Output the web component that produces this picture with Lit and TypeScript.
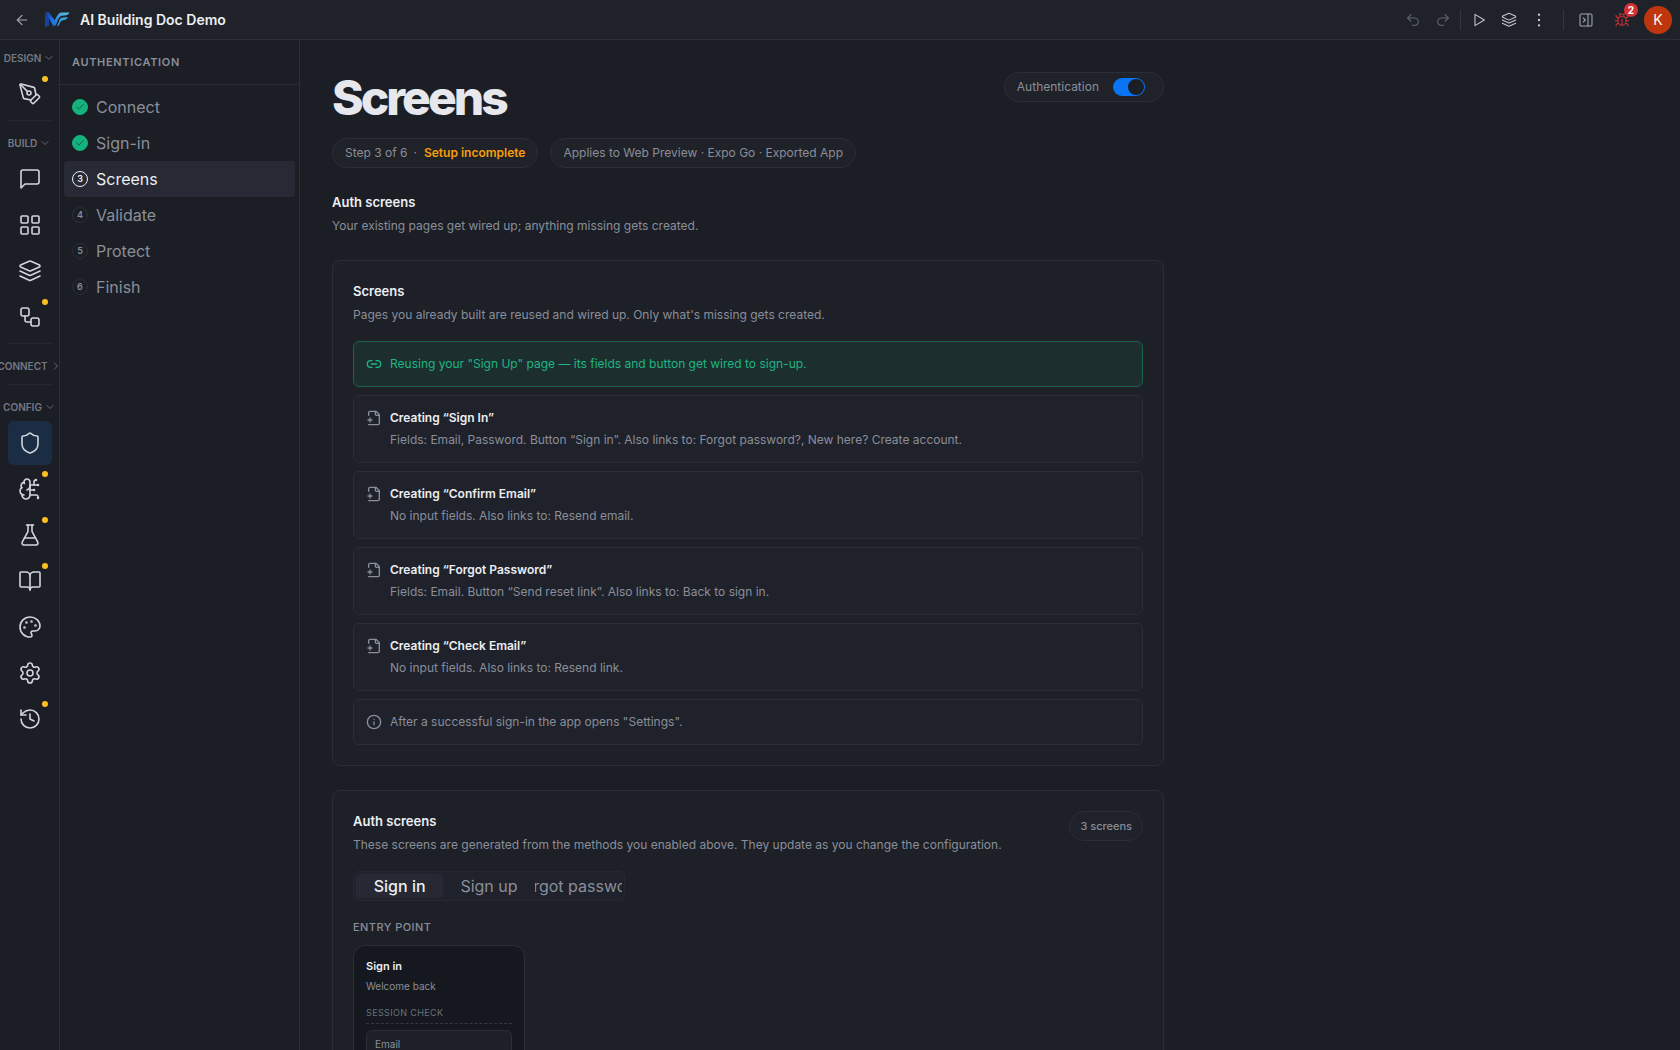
import { LitElement, html, css, svg, nothing, type TemplateResult, type SVGTemplateResult } from "lit";
import { customElement, property, state } from "lit/decorators.js";
import { classMap } from "lit/directives/class-map.js";

const glyphs: Record<string, SVGTemplateResult> = {
  back: svg`<path d="m12 19-7-7 7-7"/><path d="M19 12H5"/>`,
  undo: svg`<path d="M9 14 4 9l5-5"/><path d="M4 9h10.5a5.5 5.5 0 0 1 0 11H11"/>`,
  redo: svg`<path d="m15 14 5-5-5-5"/><path d="M20 9H9.5a5.5 5.5 0 0 0 0 11H13"/>`,
  play: svg`<path d="M6 3.5v17L20 12Z"/>`,
  layers: svg`<path d="m12.83 2.18a2 2 0 0 0-1.66 0L2.6 6.08a1 1 0 0 0 0 1.83l8.58 3.91a2 2 0 0 0 1.66 0l8.58-3.9a1 1 0 0 0 0-1.83Z"/><path d="m22 12-9.17 4.16a2 2 0 0 1-1.66 0L2 12"/><path d="m22 17-9.17 4.16a2 2 0 0 1-1.66 0L2 17"/>`,
  more: svg`<circle cx="12" cy="12" r="1"/><circle cx="12" cy="4" r="1"/><circle cx="12" cy="20" r="1"/>`,
  panel: svg`<rect x="3" y="3" width="18" height="18" rx="2"/><path d="M15 3v18"/><path d="m8 9 3 3-3 3"/>`,
  bug: svg`<path d="M8 2l1.9 1.9M16 2l-1.9 1.9M9 7.1v-1a3 3 0 1 1 6 0v1"/><path d="M12 20c-3.3 0-6-2.7-6-6v-3a4 4 0 0 1 4-4h4a4 4 0 0 1 4 4v3c0 3.3-2.7 6-6 6Z"/><path d="M12 20v-9M6.5 9C4.6 8.8 3 7.1 3 5M6 13H2M3 21c0-2.1 1.7-3.9 3.8-4M21 5c0 2.1-1.6 3.8-3.5 4M22 13h-4M17.2 17c2.1.1 3.8 1.9 3.8 4"/>`,
  pen: svg`<path d="M15.707 21.293a1 1 0 0 1-1.414 0l-1.586-1.586a1 1 0 0 1 0-1.414l5.586-5.586a1 1 0 0 1 1.414 0l1.586 1.586a1 1 0 0 1 0 1.414z"/><path d="m18 13-1.375-6.874a1 1 0 0 0-.746-.776L3.235 2.028a1 1 0 0 0-1.207 1.207L5.35 15.879a1 1 0 0 0 .776.746L13 18"/><path d="m2.3 2.3 7.286 7.286"/><circle cx="11" cy="11" r="2"/>`,
  chat: svg`<path d="M21 15a2 2 0 0 1-2 2H7l-4 4V5a2 2 0 0 1 2-2h14a2 2 0 0 1 2 2z"/>`,
  grid: svg`<rect x="3" y="3" width="7" height="7" rx="1"/><rect x="14" y="3" width="7" height="7" rx="1"/><rect x="14" y="14" width="7" height="7" rx="1"/><rect x="3" y="14" width="7" height="7" rx="1"/>`,
  flow: svg`<rect x="3" y="3" width="8" height="8" rx="2"/><path d="M7 11v4a2 2 0 0 0 2 2h4"/><rect x="13" y="13" width="8" height="8" rx="2"/>`,
  shield: svg`<path d="M20 13c0 5-3.5 7.5-7.66 8.95a1 1 0 0 1-.67-.01C7.5 20.5 4 18 4 13V6a1 1 0 0 1 1-1c2 0 4.5-1.2 6.24-2.72a1.17 1.17 0 0 1 1.52 0C14.51 3.81 17 5 19 5a1 1 0 0 1 1 1z"/>`,
  brain: svg`<path d="M12 5a3 3 0 1 0-5.997.125 4 4 0 0 0-2.526 5.77 4 4 0 0 0 .556 6.588A4 4 0 1 0 12 18Z"/><path d="M9 13a4.5 4.5 0 0 0 3-4"/><path d="M6.003 5.125A3 3 0 0 0 6.401 6.5"/><path d="M3.477 10.896a4 4 0 0 1 .585-.396"/><path d="M6 18a4 4 0 0 1-1.967-.516"/><path d="M12 13h4"/><path d="M12 18h6a2 2 0 0 1 2 2v1"/><path d="M12 8h8"/><path d="M16 8V5a2 2 0 0 1 2-2"/><circle cx="16" cy="13" r=".5"/><circle cx="18" cy="3" r=".5"/><circle cx="20" cy="21" r=".5"/><circle cx="20" cy="8" r=".5"/>`,
  flask: svg`<path d="M14 2v6a2 2 0 0 0 .245.96l5.51 10.08A2 2 0 0 1 18 22H6a2 2 0 0 1-1.755-2.96l5.51-10.08A2 2 0 0 0 10 8V2"/><path d="M6.453 15h11.094"/><path d="M8.5 2h7"/>`,
  book: svg`<path d="M12 7v14"/><path d="M3 18a1 1 0 0 1-1-1V4a1 1 0 0 1 1-1h5a4 4 0 0 1 4 4 4 4 0 0 1 4-4h5a1 1 0 0 1 1 1v13a1 1 0 0 1-1 1h-6a3 3 0 0 0-3 3 3 3 0 0 0-3-3z"/>`,
  palette: svg`<path d="M12 22a1 1 0 0 1 0-20 10 9 0 0 1 10 9 5 5 0 0 1-5 5h-2.25a1.75 1.75 0 0 0-1.4 2.8l.3.4a1.75 1.75 0 0 1-1.4 2.8z"/><circle cx="13.5" cy="6.5" r=".5"/><circle cx="17.5" cy="10.5" r=".5"/><circle cx="6.5" cy="12.5" r=".5"/><circle cx="8.5" cy="7.5" r=".5"/>`,
  gear: svg`<path d="M9.671 4.136a2.34 2.34 0 0 1 4.659 0 2.34 2.34 0 0 0 3.319 1.915 2.34 2.34 0 0 1 2.33 4.033 2.34 2.34 0 0 0 0 3.831 2.34 2.34 0 0 1-2.33 4.033 2.34 2.34 0 0 0-3.319 1.915 2.34 2.34 0 0 1-4.659 0 2.34 2.34 0 0 0-3.32-1.915 2.34 2.34 0 0 1-2.33-4.033 2.34 2.34 0 0 0 0-3.831A2.34 2.34 0 0 1 6.35 6.051a2.34 2.34 0 0 0 3.319-1.915"/><circle cx="12" cy="12" r="3"/>`,
  history: svg`<path d="M3 12a9 9 0 1 0 9-9 9.75 9.75 0 0 0-6.74 2.74L3 8"/><path d="M3 3v5h5"/><path d="M12 7v5l4 2"/>`,
  down: svg`<path d="m6 9 6 6 6-6"/>`,
  right: svg`<path d="m9 18 6-6-6-6"/>`,
  check: svg`<path d="M20 6 9 17l-5-5"/>`,
  link: svg`<path d="M9 17H7A5 5 0 0 1 7 7h2"/><path d="M15 7h2a5 5 0 1 1 0 10h-2"/><path d="M8 12h8"/>`,
  filePlus: svg`<path d="M4 22h14a2 2 0 0 0 2-2V7l-5-5H6a2 2 0 0 0-2 2v4"/><path d="M14 2v4a2 2 0 0 0 2 2h4"/><path d="M3 15h6"/><path d="M6 12v6"/>`,
  info: svg`<circle cx="12" cy="12" r="10"/><path d="M12 16v-4"/><path d="M12 8h.01"/>`,
};

@customElement("ui-icon")
export class UiIcon extends LitElement {
  @property() name = "";

  static styles = css`
    :host {
      display: block;
      flex: none;
      width: 16px;
      height: 16px;
    }
    svg {
      display: block;
      width: 100%;
      height: 100%;
      fill: none;
      stroke: currentColor;
      stroke-width: var(--stroke, 1.6);
      stroke-linecap: round;
      stroke-linejoin: round;
    }
  `;

  render() {
    return html`<svg viewBox="0 0 24 24" aria-hidden="true">${glyphs[this.name]}</svg>`;
  }
}

@customElement("top-bar")
export class TopBar extends LitElement {
  static styles = css`
    :host {
      display: block;
    }
    * {
      box-sizing: border-box;
    }
    .bar {
      display: flex;
      align-items: center;
      justify-content: space-between;
      height: 40px;
      padding: 0 8px;
      background: #1f2329;
      border-bottom: 1px solid #2c2f37;
    }
    .group {
      display: flex;
      align-items: center;
    }
    button {
      display: flex;
      align-items: center;
      justify-content: center;
      width: 30px;
      height: 30px;
      padding: 0;
      border: 0;
      background: none;
      color: #c3c6cd;
      font: inherit;
    }
    .back {
      width: 28px;
      margin-right: 8px;
      color: #a6aab2;
    }
    .dim {
      color: #63676f;
    }
    .logo {
      width: 26px;
      height: 18px;
      margin-right: 10px;
    }
    .name {
      margin: 0;
      font-size: 14px;
      line-height: 20px;
      font-weight: 600;
      color: #eceef2;
    }
    .rule {
      width: 1px;
      height: 20px;
      margin: 0 3px 0 2px;
      background: #32363e;
    }
    .rule.wide {
      margin: 0 7px 0 9px;
    }
    .panel {
      margin-right: 6px;
      color: #a2a6ae;
    }
    .bug {
      position: relative;
      margin-right: 7px;
      color: #c43232;
    }
    .badge {
      position: absolute;
      top: -2px;
      right: -1px;
      width: 14px;
      height: 14px;
      border-radius: 7px;
      background: #d53034;
      color: #ffffff;
      font-size: 10px;
      line-height: 14px;
      font-weight: 700;
    }
    .avatar {
      width: 28px;
      height: 28px;
      border-radius: 14px;
      background: #bf360c;
      color: #f5f6f8;
      font-size: 14px;
      font-weight: 400;
    }
  `;

  render() {
    return html`
      <header class="bar">
        <div class="group">
          <button class="back" aria-label="Back"><ui-icon name="back"></ui-icon></button>
          <svg class="logo" viewBox="0 0 26 18" aria-hidden="true">
            <defs>
              <linearGradient id="stem" x1="0" y1="0" x2="1" y2="1">
                <stop offset="0" stop-color="#123a8c" />
                <stop offset="0.5" stop-color="#1a63d8" />
                <stop offset="1" stop-color="#2b8cf0" />
              </linearGradient>
              <linearGradient id="wing" x1="0" y1="1" x2="1" y2="0">
                <stop offset="0" stop-color="#1668d8" />
                <stop offset="1" stop-color="#5fc4e0" />
              </linearGradient>
            </defs>
            <path fill="#14429c" d="M1 2v14.5l4-2V7z" />
            <path fill="url(#stem)" d="M1 1h3.5l6.5 8.5L9.5 15z" />
            <path fill="url(#wing)" d="M8.500 15.500C11 9 13 2.500 17 1.500h8.500C24.500 4 22 4.500 18 4.800c-3 .4-4.500 4.700-6 9.200z" />
            <path fill="#3a9fd6" d="M15.500 9c1-2.300 2.500-2.700 8.500-2.700-1 2.200-3 2.700-5 2.900-1.800.3-2.800 1.600-4 5l-2 1.300z" />
          </svg>
          <h1 class="name">AI Building Doc Demo</h1>
        </div>
        <div class="group">
          <button class="dim" aria-label="Undo"><ui-icon name="undo"></ui-icon></button>
          <button class="dim" aria-label="Redo"><ui-icon name="redo"></ui-icon></button>
          <span class="rule"></span>
          <button aria-label="Run"><ui-icon name="play"></ui-icon></button>
          <button aria-label="Layers"><ui-icon name="layers"></ui-icon></button>
          <button aria-label="More"><ui-icon name="more"></ui-icon></button>
          <span class="rule wide"></span>
          <button class="panel" aria-label="Toggle panel"><ui-icon name="panel"></ui-icon></button>
          <button class="bug" aria-label="Issues">
            <ui-icon name="bug"></ui-icon><span class="badge">2</span>
          </button>
          <button class="avatar" aria-label="Account">K</button>
        </div>
      </header>
    `;
  }
}

interface RailItem {
  icon: string;
  label: string;
  dot?: boolean;
  active?: boolean;
}

const railSections: { title: string; open: boolean; items: RailItem[] }[] = [
  { title: "DESIGN", open: true, items: [{ icon: "pen", label: "Design", dot: true }] },
  {
    title: "BUILD",
    open: true,
    items: [
      { icon: "chat", label: "Chat" },
      { icon: "grid", label: "Components" },
      { icon: "layers", label: "Layers" },
      { icon: "flow", label: "Flows", dot: true },
    ],
  },
  { title: "CONNECT", open: false, items: [] },
  {
    title: "CONFIG",
    open: true,
    items: [
      { icon: "shield", label: "Authentication", active: true },
      { icon: "brain", label: "AI", dot: true },
      { icon: "flask", label: "Tests", dot: true },
      { icon: "book", label: "Docs", dot: true },
      { icon: "palette", label: "Theme" },
      { icon: "gear", label: "Settings" },
      { icon: "history", label: "History", dot: true },
    ],
  },
];

@customElement("icon-rail")
export class IconRail extends LitElement {
  static styles = css`
    :host {
      display: block;
    }
    * {
      box-sizing: border-box;
    }
    .rail {
      display: flex;
      flex-direction: column;
      width: 60px;
      height: 100%;
      padding-top: 4px;
      overflow: hidden;
      border-right: 1px solid #2b2e36;
    }
    .section {
      display: flex;
      flex-direction: column;
      align-items: center;
    }
    .section + .section::before {
      content: "";
      width: 44px;
      height: 1px;
      margin: 4px 0 8px;
      background: #25282f;
    }
    .title {
      display: flex;
      align-items: center;
      gap: 2px;
      height: 28px;
      padding: 0;
      border: 0;
      background: none;
      color: #757983;
      font: inherit;
      font-size: 10px;
      font-weight: 600;
      white-space: nowrap;
    }
    .title ui-icon {
      width: 12px;
      height: 12px;
    }
    .items {
      display: flex;
      flex-direction: column;
      gap: 2px;
    }
    .item {
      position: relative;
      display: flex;
      align-items: center;
      justify-content: center;
      width: 44px;
      height: 44px;
      padding: 0;
      border: 0;
      border-radius: 6px;
      background: none;
      color: #d2d5dd;
    }
    .item ui-icon {
      width: 24px;
      height: 24px;
    }
    .item.active {
      background: #1a2d45;
    }
    .dot {
      position: absolute;
      top: 4px;
      right: 4px;
      width: 6px;
      height: 6px;
      border-radius: 3px;
      background: #fbbf24;
    }
  `;

  render() {
    return html`
      <nav class="rail" aria-label="Workspace">
        ${railSections.map(
          (s) => html`
            <div class="section">
              <button class="title" aria-expanded=${s.open}>
                ${s.title}<ui-icon name=${s.open ? "down" : "right"}></ui-icon>
              </button>
              <div class="items">
                ${s.items.map(
                  (i) => html`
                    <button class=${classMap({ item: true, active: !!i.active })} aria-label=${i.label}>
                      <ui-icon name=${i.icon}></ui-icon>
                      ${i.dot ? html`<span class="dot"></span>` : nothing}
                    </button>
                  `,
                )}
              </div>
            </div>
          `,
        )}
      </nav>
    `;
  }
}

@customElement("step-list")
export class StepList extends LitElement {
  @property({ type: Number }) current = 3;

  private steps = ["Connect", "Sign-in", "Screens", "Validate", "Protect", "Finish"];

  static styles = css`
    :host {
      display: block;
    }
    * {
      box-sizing: border-box;
    }
    .panel {
      width: 240px;
      height: 100%;
      border-right: 1px solid #2b2e36;
    }
    .title {
      margin: 0;
      padding: 12px;
      border-bottom: 1px solid #2b2e36;
      color: #8a8e9a;
      font-size: 11px;
      line-height: 20px;
      font-weight: 600;
      letter-spacing: 0.06em;
    }
    .steps {
      margin: 0;
      padding: 4px;
      list-style: none;
    }
    .step {
      display: flex;
      align-items: center;
      gap: 8px;
      width: 100%;
      height: 36px;
      padding: 0 8px;
      border: 0;
      border-radius: 4px;
      background: none;
      color: #8a8e9a;
      font: inherit;
      font-size: 16px;
      text-align: left;
    }
    .mark {
      display: flex;
      align-items: center;
      justify-content: center;
      width: 16px;
      height: 16px;
      border: 1px solid #2b2e36;
      border-radius: 8px;
      font-size: 9px;
      line-height: 14px;
      font-weight: 600;
    }
    .mark ui-icon {
      width: 10px;
      height: 10px;
    }
    .done .mark {
      border-color: #14b37d;
      background: #14b37d;
      color: #163029;
    }
    .current {
      background: #272a34;
      color: #eceef2;
    }
    .current .mark {
      border-color: #eceef2;
    }
  `;

  render() {
    return html`
      <aside class="panel">
        <h2 class="title">AUTHENTICATION</h2>
        <ol class="steps">
          ${this.steps.map((label, i) => {
            const n = i + 1;
            const done = n < this.current;
            return html`
              <li>
                <button class=${classMap({ step: true, done, current: n === this.current })}>
                  <span class="mark">${done ? html`<ui-icon name="check"></ui-icon>` : n}</span>
                  ${label}
                </button>
              </li>
            `;
          })}
        </ol>
      </aside>
    `;
  }
}

interface PlanRow {
  icon: string;
  tone?: "reuse";
  title?: string;
  text: string;
}

const planRows: PlanRow[] = [
  { icon: "link", tone: "reuse", text: 'Reusing your "Sign Up" page — its fields and button get wired to sign-up.' },
  {
    icon: "filePlus",
    title: "Creating “Sign In”",
    text: "Fields: Email, Password. Button “Sign in”. Also links to: Forgot password?, New here? Create account.",
  },
  { icon: "filePlus", title: "Creating “Confirm Email”", text: "No input fields. Also links to: Resend email." },
  {
    icon: "filePlus",
    title: "Creating “Forgot Password”",
    text: "Fields: Email. Button “Send reset link”. Also links to: Back to sign in.",
  },
  { icon: "filePlus", title: "Creating “Check Email”", text: "No input fields. Also links to: Resend link." },
  { icon: "info", text: 'After a successful sign-in the app opens "Settings".' },
];

@customElement("screens-page")
export class ScreensPage extends LitElement {
  @state() private tab = 0;

  private tabs = ["Sign in", "Sign up", "Forgot password"];

  static styles = css`
    :host {
      display: block;
    }
    * {
      box-sizing: border-box;
    }
    h1,
    h2,
    h3,
    h4,
    p {
      margin: 0;
    }
    .page {
      display: flex;
      flex-direction: column;
      gap: 24px;
      max-width: 896px;
      padding: 32px;
    }
    .head {
      display: flex;
      align-items: flex-start;
      justify-content: space-between;
    }
    .title {
      margin-bottom: 14px;
      color: #e6e8ed;
      font-size: 48px;
      line-height: 52px;
      font-weight: 800;
      letter-spacing: -3px;
    }
    .pills {
      display: flex;
      gap: 12px;
    }
    .pill {
      display: flex;
      align-items: center;
      height: 30px;
      padding: 0 12px;
      border: 1px solid #2b2e36;
      border-radius: 15px;
      background: #1f2228;
      color: #8a8e9a;
      font-size: 12px;
      line-height: 20px;
      white-space: nowrap;
    }
    .dotsep {
      margin: 0 7px 0 6px;
    }
    .warn {
      color: #f59e0b;
      font-weight: 600;
    }
    .toggle {
      gap: 14px;
      padding-right: 18px;
    }
    .switch {
      display: grid;
      align-items: center;
      width: 32px;
      height: 18px;
      margin: 0;
      padding: 0 1px;
      appearance: none;
      border-radius: 9px;
      background: #3a3e48;
    }
    .switch::before {
      content: "";
      width: 16px;
      height: 16px;
      border-radius: 8px;
      background: #1b1e25;
    }
    .switch:checked {
      justify-items: end;
      background: #0a74f5;
    }
    .heading {
      color: #eceef2;
      font-size: 13px;
      line-height: 20px;
      font-weight: 600;
    }
    .text {
      color: #8a8e9a;
      font-size: 12px;
      line-height: 20px;
    }
    .intro {
      display: flex;
      flex-direction: column;
      gap: 4px;
    }
    .card {
      display: flex;
      flex-direction: column;
      gap: 16px;
      padding: 20px;
      border: 1px solid #2b2e36;
      border-radius: 8px;
      background: #1d2027;
    }
    .rows {
      display: flex;
      flex-direction: column;
      gap: 8px;
      margin: 0;
      padding: 0;
      list-style: none;
    }
    .row {
      display: flex;
      gap: 8px;
      padding: 12px;
      border: 1px solid #2b2e36;
      border-radius: 6px;
      background: #1f222a;
      color: #8a8e9a;
    }
    .row ui-icon {
      --stroke: 2;
      margin-top: 2px;
    }
    .body {
      display: flex;
      flex-direction: column;
      gap: 2px;
    }
    .row .heading {
      font-size: 12px;
    }
    .reuse {
      border-color: #1b654f;
      background: #1c2e2e;
      color: #1fb584;
    }
    .reuse .text {
      color: inherit;
    }
    .count {
      padding: 0 10px;
      background: #1f222b;
      font-size: 11px;
      font-weight: 500;
    }
    .tabs {
      display: grid;
      grid-template-columns: repeat(3, 1fr);
      gap: 2px;
      width: 272px;
      height: 30px;
      padding: 2px;
      border: 1px solid #252830;
      border-radius: 6px;
      background: #1f222a;
    }
    .tab {
      display: flex;
      align-items: center;
      justify-content: center;
      min-width: 0;
      padding: 0;
      overflow: hidden;
      border: 0;
      border-radius: 4px;
      background: none;
      color: #8a8e9a;
      font: inherit;
      font-size: 16px;
      white-space: nowrap;
    }
    .tab.selected {
      background: #262933;
      color: #eceef2;
      font-weight: 500;
    }
    .entry {
      display: flex;
      flex-direction: column;
      align-items: flex-start;
      gap: 8px;
    }
    .caption {
      color: #8a8e9a;
      font-size: 11px;
      line-height: 20px;
      font-weight: 500;
      letter-spacing: 0.04em;
    }
    .preview {
      display: flex;
      flex-direction: column;
      width: 172px;
      padding: 10px 12px;
      border: 1px solid #2b2e36;
      border-radius: 12px;
      background: #15181e;
    }
    .preview .heading {
      font-size: 11px;
    }
    .preview .text {
      font-size: 10px;
    }
    .preview .session {
      margin: 6px 0;
      padding-top: 1px;
      border-bottom: 1px dashed #343841;
      color: #6c707b;
      font-size: 9px;
      letter-spacing: 0.04em;
    }
    .field {
      width: 100%;
      height: 28px;
      padding: 0 8px;
      border: 1px solid #2b2e36;
      border-radius: 6px;
      background: #1d2027;
      color: #8a8e9a;
      font: inherit;
      font-size: 10px;
    }
    .field::placeholder {
      color: #8a8e9a;
      opacity: 1;
    }
  `;

  private row(r: PlanRow): TemplateResult {
    return html`
      <li class=${classMap({ row: true, reuse: r.tone === "reuse" })}>
        <ui-icon name=${r.icon}></ui-icon>
        <div class="body">
          ${r.title ? html`<h3 class="heading">${r.title}</h3>` : nothing}
          <p class="text">${r.text}</p>
        </div>
      </li>
    `;
  }

  render() {
    return html`
      <main class="page">
        <div class="head">
          <div>
            <h1 class="title">Screens</h1>
            <div class="pills">
              <div class="pill">Step 3 of 6<span class="dotsep">·</span><span class="warn">Setup incomplete</span></div>
              <div class="pill">Applies to Web Preview · Expo Go · Exported App</div>
            </div>
          </div>
          <label class="pill toggle">
            Authentication
            <input class="switch" type="checkbox" role="switch" checked />
          </label>
        </div>

        <div class="intro">
          <h2 class="heading">Auth screens</h2>
          <p class="text">Your existing pages get wired up; anything missing gets created.</p>
        </div>

        <section class="card">
          <div class="intro">
            <h2 class="heading">Screens</h2>
            <p class="text">Pages you already built are reused and wired up. Only what's missing gets created.</p>
          </div>
          <ul class="rows">
            ${planRows.map((r) => this.row(r))}
          </ul>
        </section>

        <section class="card">
          <div class="head">
            <div class="intro">
              <h2 class="heading">Auth screens</h2>
              <p class="text">
                These screens are generated from the methods you enabled above. They update as you change the
                configuration.
              </p>
            </div>
            <span class="pill count">3 screens</span>
          </div>
          <div class="tabs" role="tablist">
            ${this.tabs.map(
              (label, i) => html`
                <button
                  class=${classMap({ tab: true, selected: i === this.tab })}
                  role="tab"
                  aria-selected=${i === this.tab}
                  @click=${() => (this.tab = i)}
                >
                  ${label}
                </button>
              `,
            )}
          </div>
          <div class="entry">
            <h3 class="caption">ENTRY POINT</h3>
            <div class="preview">
              <h4 class="heading">Sign in</h4>
              <p class="text">Welcome back</p>
              <p class="text session">SESSION CHECK</p>
              <input class="field" type="email" placeholder="Email" aria-label="Email" />
            </div>
          </div>
        </section>
      </main>
    `;
  }
}

@customElement("app-root")
export class AppRoot extends LitElement {
  static styles = css`
    :host {
      display: flex;
      flex-direction: column;
      height: 100vh;
      overflow: hidden;
      background: #1b1e25;
      color: #eceef2;
      font-family: Inter, "Liberation Sans", sans-serif;
    }
    .workspace {
      display: flex;
      flex: 1;
      min-height: 0;
    }
    screens-page {
      flex: 1;
      min-width: 0;
      overflow-y: auto;
      scrollbar-width: none;
    }
  `;

  render() {
    return html`
      <top-bar></top-bar>
      <div class="workspace">
        <icon-rail></icon-rail>
        <step-list></step-list>
        <screens-page></screens-page>
      </div>
    `;
  }
}
